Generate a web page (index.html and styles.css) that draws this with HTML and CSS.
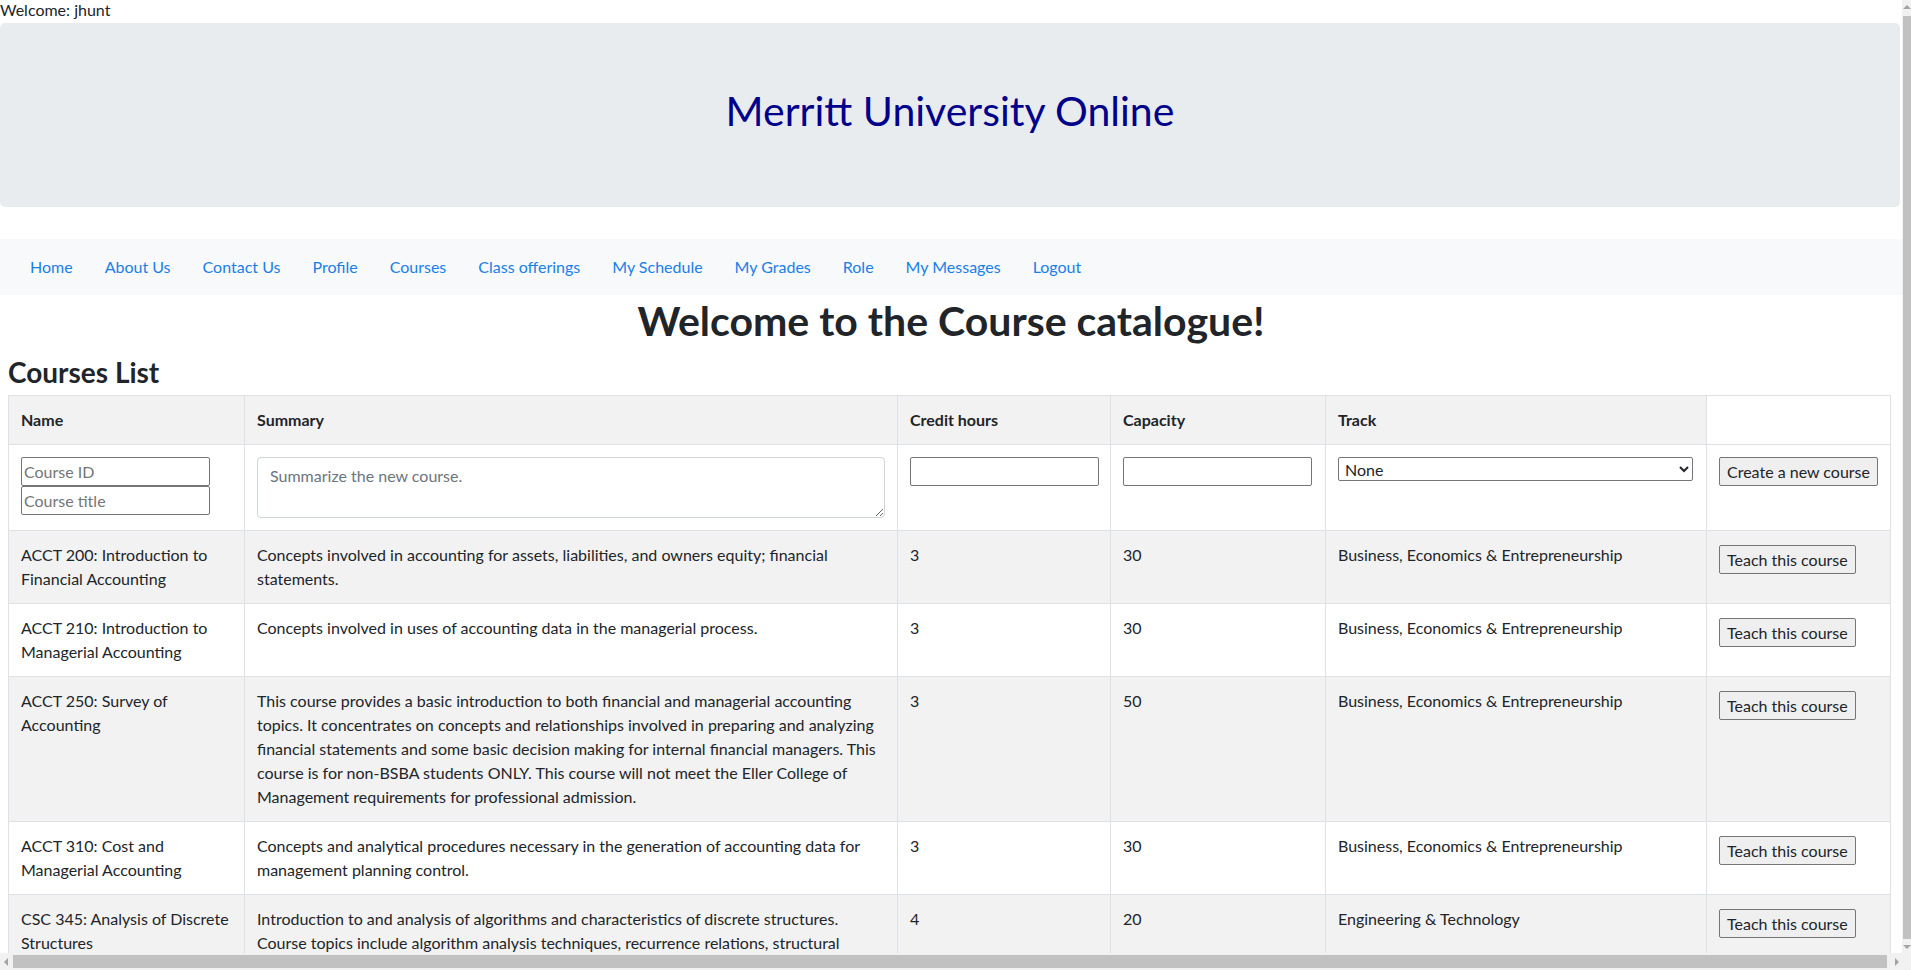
FILE: index.html
```html
<!DOCTYPE html>
<html lang="en">
<head>
<meta charset="utf-8">
<title>Courses</title>
<link rel="stylesheet" href="styles.css">
</head>
<body>
<div class="page">
  <div class="welcome">Welcome: jhunt</div>
  <div class="jumbotron"><h1 class="site-title">Merritt University Online</h1></div>
  <nav class="navbar">
    <ul class="nav">
      <li><a class="nav-link" href="#">Home</a></li>
      <li><a class="nav-link" href="#">About Us</a></li>
      <li><a class="nav-link" href="#">Contact Us</a></li>
      <li><a class="nav-link" href="#">Profile</a></li>
      <li><a class="nav-link" href="#">Courses</a></li>
      <li><a class="nav-link" href="#">Class offerings</a></li>
      <li><a class="nav-link" href="#">My Schedule</a></li>
      <li><a class="nav-link" href="#">My Grades</a></li>
      <li><a class="nav-link" href="#">Role</a></li>
      <li><a class="nav-link" href="#">My Messages</a></li>
      <li><a class="nav-link" href="#">Logout</a></li>
    </ul>
  </nav>
  <main class="content">
    <h1 class="page-title">Welcome to the Course catalogue!</h1>
    <h3 class="list-title">Courses List</h3>
    <table class="courses">
      <colgroup>
        <col class="c-name"><col class="c-summary"><col class="c-credit"><col class="c-cap"><col class="c-track"><col class="c-act">
      </colgroup>
      <thead>
        <tr class="head-row">
          <th>Name</th><th>Summary</th><th>Credit hours</th><th>Capacity</th><th>Track</th><th class="th-blank"></th>
        </tr>
        <tr class="new-row">
          <td>
            <input class="in-text in-name" type="text" placeholder="Course ID">
            <input class="in-text in-name" type="text" placeholder="Course title">
          </td>
          <td><textarea class="in-summary" placeholder="Summarize the new course."></textarea></td>
          <td><input class="in-text in-num" type="text"></td>
          <td><input class="in-text in-num" type="text"></td>
          <td><select class="in-track"><option>None</option><option>Business, Economics &amp; Entrepreneurship</option><option>Engineering &amp; Technology</option></select></td>
          <td><button class="btn" type="button">Create a new course</button></td>
        </tr>
      </thead>
      <tbody>
        <tr>
          <td>ACCT 200: Introduction to Financial Accounting</td>
          <td>Concepts involved in accounting for assets, liabilities, and owners equity; financial statements.</td>
          <td>3</td><td>30</td><td>Business, Economics &amp; Entrepreneurship</td>
          <td><button class="btn btn-teach" type="button">Teach this course</button></td>
        </tr>
        <tr>
          <td>ACCT 210: Introduction to Managerial Accounting</td>
          <td>Concepts involved in uses of accounting data in the managerial process.</td>
          <td>3</td><td>30</td><td>Business, Economics &amp; Entrepreneurship</td>
          <td><button class="btn btn-teach" type="button">Teach this course</button></td>
        </tr>
        <tr>
          <td>ACCT 250: Survey of Accounting</td>
          <td>This course provides a basic introduction to both financial and managerial accounting topics. It concentrates on concepts and relationships involved in preparing and analyzing financial statements and some basic decision making for internal financial managers. This course is for non-BSBA students ONLY. This course will not meet the Eller College of Management requirements for professional admission.</td>
          <td>3</td><td>50</td><td>Business, Economics &amp; Entrepreneurship</td>
          <td><button class="btn btn-teach" type="button">Teach this course</button></td>
        </tr>
        <tr>
          <td>ACCT 310: Cost and Managerial Accounting</td>
          <td>Concepts and analytical procedures necessary in the generation of accounting data for management planning control.</td>
          <td>3</td><td>30</td><td>Business, Economics &amp; Entrepreneurship</td>
          <td><button class="btn btn-teach" type="button">Teach this course</button></td>
        </tr>
        <tr>
          <td>CSC 345: Analysis of Discrete Structures</td>
          <td>Introduction to and analysis of algorithms and characteristics of discrete structures. Course topics include algorithm analysis techniques, recurrence relations, structural induction, graphs and trees, and combinatorics.</td>
          <td>4</td><td>20</td><td>Engineering &amp; Technology</td>
          <td><button class="btn btn-teach" type="button">Teach this course</button></td>
        </tr>
      </tbody>
    </table>
  </main>
</div>
<div class="vscroll"><span class="arrow-up"></span><div class="vthumb"></div><span class="arrow-down"></span></div>
<div class="hscroll"><span class="arrow-left"></span><div class="hthumb"></div><span class="arrow-right"></span></div>
</body>
</html>
```
FILE: styles.css
```css
html, body { margin: 0; padding: 0; overflow: hidden; height: 970px; }
body {
  font-family: Lato, "Open Sans", sans-serif;
  font-size: 16px;
  line-height: 24px;
  color: #212529;
  background: #fff;
}
.page { width: 1902px; }
.welcome { height: 23px; line-height: 20px; color: #212529; }
.jumbotron {
  background: #e9ecef;
  border-radius: 5px;
  padding: 64px 32px;
  margin: 0 2px 32px 0;
}
.site-title {
  margin: 0 0 8px;
  font-size: 41px;
  font-weight: 400;
  line-height: 48px;
  text-align: center;
  color: #00008b;
}
.navbar { background: #f8f9fa; padding: 8px 14px; }
.nav { list-style: none; margin: 0; padding: 0; display: flex; }
.nav-link { display: block; padding: 8px 16px; color: #1a7fe8; text-decoration: none; }
.content { padding: 0 8px; }
.page-title { margin: 0 0 8px; font-size: 41px; font-weight: 700; line-height: 52px; text-align: center; }
.list-title { margin: 0 0 6px; font-size: 28px; font-weight: 700; line-height: 34px; }
.courses { border-collapse: collapse; table-layout: fixed; width: 1882px; }
.c-name { width: 236px; } .c-summary { width: 653px; } .c-credit { width: 213px; }
.c-cap { width: 215px; } .c-track { width: 381px; } .c-act { width: 184px; }
.courses th, .courses td { border: 1px solid #dee2e6; padding: 12px; text-align: left; vertical-align: top; }
.courses th { font-weight: 700; background: #f2f2f2; }
.courses th.th-blank { background: #fff; }
.courses tbody tr:nth-child(odd) td { background: #f2f2f2; }
.in-text {
  box-sizing: border-box; height: 29px; padding: 1px 2px; border: 1px solid #767676; border-radius: 2px;
  font: inherit; line-height: normal; background: #fff; color: #212529; margin: 0;
}
.in-text::placeholder { color: #757575; }
.in-name { display: block; width: 189px; }
.in-num { width: 189px; }
.in-summary {
  box-sizing: border-box; display: block; width: 628px; height: 61px; padding: 6px 12px;
  border: 1px solid #ced4da; border-radius: 4px; font: inherit; line-height: 24px; color: #495057; margin: 0;
}
.in-summary::placeholder { color: #6c757d; }
.in-track {
  box-sizing: border-box; width: 355px; height: 24px; border: 1px solid #767676; border-radius: 2px;
  font: inherit; line-height: normal; background: #fff; color: #212529; padding: 0 0 0 2px; margin: 0;
}
.btn {
  box-sizing: border-box; height: 29px; padding: 1px 7px; border: 1px solid #767676; border-radius: 2px;
  background: #efefef; font: inherit; line-height: 24px; color: #212529; margin: 0;
}
.btn-teach { margin-top: 2px; }
.vscroll { position: fixed; top: 0; right: 0; width: 9px; height: 953px; background: #f1f1f1; }
.vthumb { position: absolute; left: 1px; right: 0; top: 16px; bottom: 14px; background: #c1c1c1; }
.hscroll { position: fixed; left: 0; right: 0; bottom: 0; height: 17px; background: #f1f1f1; }
.hthumb { position: absolute; left: 13px; right: 24px; top: 2px; bottom: 2px; background: #c1c1c1; }
.arrow-left, .arrow-right, .arrow-up, .arrow-down { position: absolute; width: 0; height: 0; }
.arrow-left { left: 4px; top: 5px; border-top: 4px solid transparent; border-bottom: 4px solid transparent; border-right: 4px solid #a3a3a3; }
.arrow-right { right: 12px; top: 5px; border-top: 4px solid transparent; border-bottom: 4px solid transparent; border-left: 4px solid #a3a3a3; }
.arrow-up { top: 5px; left: 1px; border-left: 4px solid transparent; border-right: 4px solid transparent; border-bottom: 4px solid #a3a3a3; }
.arrow-down { bottom: 4px; left: 1px; border-left: 4px solid transparent; border-right: 4px solid transparent; border-top: 4px solid #a3a3a3; }
```
